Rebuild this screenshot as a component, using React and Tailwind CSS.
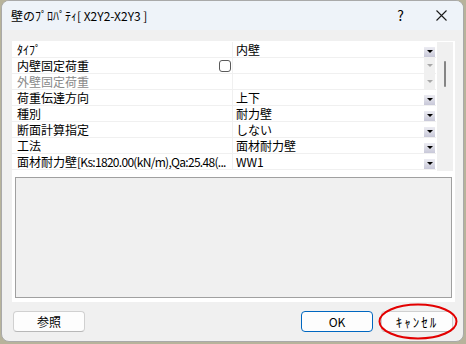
import React from 'react';

const rows = [
    { name: 'ﾀｲﾌﾟ', value: '内壁' },
    { name: '内壁固定荷重', value: '', check: true, disabled: true },
    { name: '外壁固定荷重', value: '', dim: true, disabled: true },
    { name: '荷重伝達方向', value: '上下' },
    { name: '種別', value: '耐力壁' },
    { name: '断面計算指定', value: 'しない' },
    { name: '工法', value: '面材耐力壁' },
    { name: '面材耐力壁', extra: '[Ks:1820.00(kN/m),Qa:25.48(...', value: 'WW1' },
];

function Tri({ color }) {
    return (
        <svg width="6" height="4" viewBox="0 0 6 4">
            <polygon points="0,0 6,0 3,3" fill={color} />
        </svg>
    );
}

function DropButton({ disabled }) {
    if (disabled) {
        return (
            <div className="w-[11px] h-full mr-[1px] bg-[#f0f0f0] flex items-center justify-center">
                <Tri color="#a8a8a8" />
            </div>
        );
    }
    return (
        <div className="self-end w-[11px] h-[10px] mr-[1px] bg-linear-to-b from-[#ececf2] to-[#c8c8d8] flex items-center justify-center">
            <Tri color="#000" />
        </div>
    );
}

function Row({ row }) {
    return (
        <div className="flex h-[16px] border-b border-[#f0f0f0]">
            <div className="w-[221px] border-r border-[#f0f0f0] flex items-center pl-[5px] pr-[1px] overflow-hidden">
                <span className={`whitespace-nowrap overflow-hidden ${row.dim ? 'text-[#8a8a8a]' : 'text-black'}`}>
                    {row.name}
                    {row.extra && <span className="tracking-[-0.7px]">{row.extra}</span>}
                </span>
                {row.check && (
                    <div className="ml-auto w-[12px] h-[12px] rounded-[3px] border border-[#5a5a5a] bg-white" />
                )}
            </div>
            <div className="flex-1 flex items-center pl-[3px]">
                <span className="flex-1 whitespace-nowrap">{row.value}</span>
                <DropButton disabled={row.disabled} />
            </div>
        </div>
    );
}

function Btn({ children, primary }) {
    return (
        <button
            className={`h-[21px] w-[72px] rounded-[4px] bg-[#fdfdfd] text-[12px] leading-none text-black flex items-center justify-center border ${
                primary ? 'border-[#0067c0]' : 'border-[#d0d0d0] border-b-[#b8b8b8]'
            }`}
        >
            {children}
        </button>
    );
}

export default function App() {
    return (
        <div className="w-[466px] h-[344px] bg-[#b7b39b] font-['Noto_Sans_CJK_JP','Noto_Sans',sans-serif] text-[12px] leading-[15px]">
            <div className="ml-[1px] w-[463px] h-[342px] rounded-[8px] border border-[#a9a9a9] bg-[#f0f0f0] overflow-hidden flex flex-col">
                {/* title bar */}
                <div className="h-[29px] bg-[#eef3f9] flex items-center pl-[9px] shrink-0">
                    <span className="text-[12px] text-black whitespace-nowrap">壁のﾌﾟﾛﾊﾟﾃｨ[ X2Y2-X2Y3 ]</span>
                    <span className="ml-auto mr-[32px] text-[14px] text-black">?</span>
                    <svg width="11" height="11" viewBox="0 0 11 11" className="mr-[16px]">
                        <path d="M0.5 0.5 L10.5 10.5 M10.5 0.5 L0.5 10.5" stroke="#1a1a1a" strokeWidth="1.1" />
                    </svg>
                </div>

                <div className="flex-1 pl-[10px] pt-[11px]">
                    {/* property panel */}
                    <div className="w-[443px] h-[261px] bg-white flex flex-col">
                        <div className="flex pt-[1px]">
                            <div className="w-[424px]">
                                {rows.map((r, i) => (
                                    <Row key={i} row={r} />
                                ))}
                            </div>
                            <div className="ml-[1px] w-[16px] h-[129px] bg-[#f0f0f0] flex justify-center pt-[19px]">
                                <div className="w-[2px] h-[26px] rounded-full bg-[#858585]" />
                            </div>
                        </div>
                        <div className="mt-[6px] ml-[3px] w-[437px] h-[121px] border border-[#a0a0a0] bg-[#f0f0f0]" />
                    </div>

                    {/* buttons */}
                    <div className="flex items-center mt-[9px] w-[441px] pl-[1px]">
                        <Btn>参照</Btn>
                        <div className="flex-1" />
                        <Btn primary>OK</Btn>
                        <div className="relative ml-[8px]">
                            <Btn>
                                <span className="tracking-[2px] text-[13px]">ｷｬﾝｾﾙ</span>
                            </Btn>
                            <svg
                                className="absolute left-[-3px] top-[-8px] pointer-events-none"
                                width="80"
                                height="37"
                                viewBox="0 0 80 37"
                            >
                                <ellipse cx="40" cy="18.5" rx="38.5" ry="17" fill="none" stroke="#e30000" strokeWidth="2" />
                            </svg>
                        </div>
                    </div>
                </div>
            </div>
        </div>
    );
}
